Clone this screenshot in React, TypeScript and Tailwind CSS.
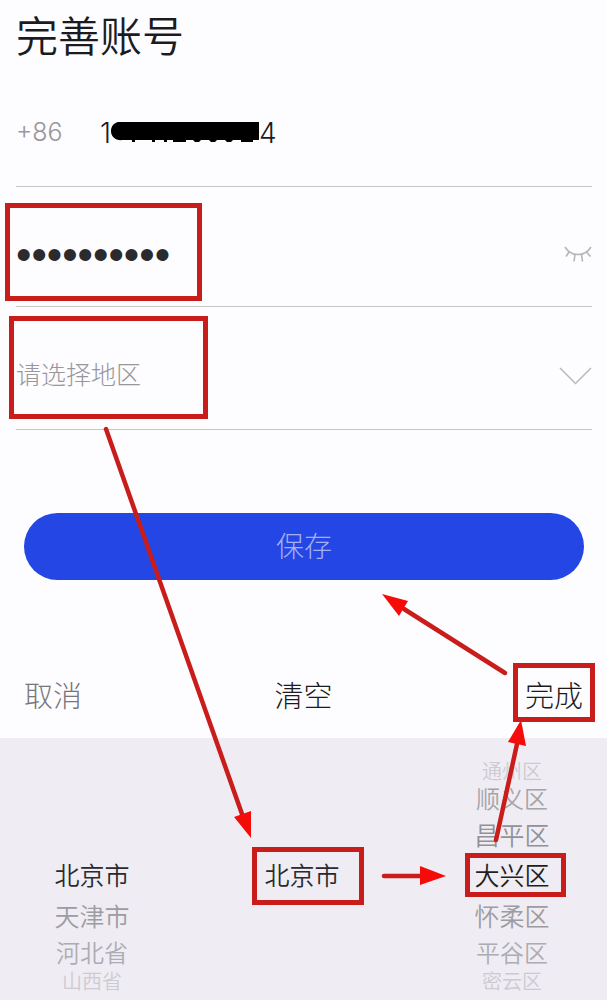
import React, { useState } from 'react';

type PickerItem = { name: string; row: string };

const provinces: PickerItem[] = [
  { name: '北京市', row: 'h-10 text-[25px] text-[#2a2a2e]' },
  { name: '天津市', row: 'h-[41px] text-[25px] text-[#9d9ca2]' },
  { name: '河北省', row: 'h-8 text-2xl text-[#adacb3]' },
  { name: '山西省', row: 'h-6 text-xl text-[#cccbd1]' },
];

const cities: PickerItem[] = [{ name: '北京市', row: 'h-10 text-[25px] text-[#2a2a2e]' }];

const districts: PickerItem[] = [
  { name: '通州区', row: 'h-6 text-xl text-[#cccbd1]' },
  { name: '顺义区', row: 'h-8 text-2xl text-[#a5a4aa]' },
  { name: '昌平区', row: 'h-[41px] text-[25px] text-[#929197]' },
  { name: '大兴区', row: 'h-10 text-[25px] text-[#1f1f22]' },
  { name: '怀柔区', row: 'h-[41px] text-[25px] text-[#9d9ca2]' },
  { name: '平谷区', row: 'h-8 text-2xl text-[#adacb3]' },
  { name: '密云区', row: 'h-6 text-xl text-[#cccbd1]' },
];

const App: React.FC = () => {
  const [password, setPassword] = useState('abcd123456');
  const [visible, setVisible] = useState(false);
  const [region, setRegion] = useState('');

  return (
    <div className="relative min-h-screen overflow-hidden bg-[#fdfcfe] font-['Inter','Noto_Sans_CJK_SC',sans-serif] font-light">
      <form className="pl-4 pr-[15px]" onSubmit={(e) => e.preventDefault()}>
        <h1 className="h-20 text-[42px] leading-[74px] font-[350] text-[#1c1c1e]">完善账号</h1>

        <div className="flex h-[107px] items-center border-b border-[#c6c5c9]">
          <span className="w-[84px] text-[25px] text-[#98979b]">+86</span>
          <div className="flex items-center text-[28px] text-[#1c1c1e]">
            <span>1</span>
            <MaskBar />
            <span>4</span>
          </div>
        </div>

        <div className="relative flex h-30 items-center border-b border-[#c6c5c9] pt-4">
          <input
            type={visible ? 'text' : 'password'}
            aria-label="密码"
            value={password}
            onChange={(e) => setPassword(e.target.value)}
            className="h-12 min-w-0 flex-1 bg-transparent font-['Liberation_Sans',sans-serif] text-[44px] font-normal text-[#2b2a2d] outline-none"
          />
          <button type="button" aria-label="显示密码" onClick={() => setVisible(!visible)}>
            <ClosedEye />
          </button>
          <Mark className="-left-[11px] top-4 h-[98px] w-[197px]" />
        </div>

        <div className="relative flex h-[123px] items-center border-b border-[#c6c5c9] pt-4">
          <select
            aria-label="地区"
            value={region}
            onChange={(e) => setRegion(e.target.value)}
            className="min-w-0 flex-1 appearance-none bg-transparent text-[25px] text-[#98979b] outline-none"
          >
            <option value="">请选择地区</option>
            {districts.map((d) => (
              <option key={d.name} value={d.name}>{d.name}</option>
            ))}
          </select>
          <svg className="pointer-events-none" width="33" height="18" viewBox="0 0 33 18" fill="none" stroke="#b9b8bc" strokeWidth="1.5">
            <path d="M1 1l15.5 15.5L32 1" />
          </svg>
          <Mark className="-left-[7px] top-[9px] h-[103px] w-[199px]" />
        </div>

        <div className="px-2 pt-[83px]">
          <button type="submit" className="h-[67px] w-full rounded-full bg-[#2446e4] text-[28px] text-[#a3b0f5]">
            保存
          </button>
        </div>
      </form>

      <div className="mt-[76px] flex h-[82px] items-center justify-between px-6 text-[29px] text-[#1c1c1e]">
        <button type="button" className="text-[#77767a]">取消</button>
        <button type="button">清空</button>
        <button type="button" className="relative">
          完成
          <Mark className="-inset-x-[12px] -top-3 -bottom-[3px]" />
        </button>
      </div>

      <div className="flex min-h-[262px] items-start justify-between bg-[#efedf3] pb-1 pl-[52px] pr-[55px] pt-[22px]">
        <PickerColumn label="省份" items={provinces} selected="北京市" className="pt-[97px]" />
        <PickerColumn label="城市" items={cities} selected="北京市" className="pt-[97px]" mark="-left-[10px] -right-[22px] -top-[10px] -bottom-2" />
        <PickerColumn label="区县" items={districts} selected="大兴区" mark="-left-[7px] -right-[14px] -top-1 bottom-0" />
      </div>

      <Arrows />
    </div>
  );
};

const PickerColumn = ({ label, items, selected, className = '', mark }: {
  label: string;
  items: PickerItem[];
  selected: string;
  className?: string;
  mark?: string;
}) => (
  <ul aria-label={label} className={`w-20 font-[350] ${className}`}>
    {items.map((item) => (
      <li key={item.name} className={`relative flex items-center justify-center whitespace-nowrap ${item.row}`}>
        <button type="button" aria-pressed={item.name === selected}>
          {item.name}
        </button>
        {mark && item.name === selected && <Mark className={mark} />}
      </li>
    ))}
  </ul>
);

const Mark = ({ className }: { className: string }) => (
  <span className={`pointer-events-none absolute border-[5px] border-[#c91d1b] ${className}`} />
);

// strip that hides the middle digits of the phone number
const MaskBar = () => (
  <svg width="148" height="24" viewBox="0 0 148 24" fill="#000">
    <path d="M7 1H148V19H12C5 20 0 16 0 10C0 5 3 2 7 1Z" />
    <path d="M21 19h3v2h-3zM41 19h3v2h-3zM53 19h3v2h-3zM62 19h13v2H62zM82 19h8l-2 2h-4zM98 19h8l-2 2h-4zM114 19h8l-2 2h-4zM130 19h12v2h-12z" />
  </svg>
);

const ClosedEye = () => (
  <svg width="28" height="18" viewBox="0 0 28 18" fill="none" stroke="#b5b4b8" strokeWidth="1.6">
    <path d="M1 1c3 5 8 7.500 13 7.500S24 6 27 1" />
    <path d="M5 6l-3 4.500M11 8.500l-1 7M17.500 8.500l1 7M22.500 6l4 4.500" />
  </svg>
);

const Arrows = () => (
  <svg className="pointer-events-none absolute inset-0 h-full w-full" viewBox="0 0 607 1000" preserveAspectRatio="none">
    <g stroke="#c91d1b" strokeWidth="4.500" strokeLinecap="round">
      <path d="M106 429L242 814" />
      <path d="M384 876H420" />
      <path d="M496 840L517 744" />
      <path d="M505 673L404 609" />
    </g>
    <g fill="#f50b09">
      <path d="M251 838L234 817L251 811Z" />
      <path d="M446 876L420 885V866Z" />
      <path d="M521 720L508 742L526 746Z" />
      <path d="M382 594L399 616L408 601Z" />
    </g>
  </svg>
);

export default App;
